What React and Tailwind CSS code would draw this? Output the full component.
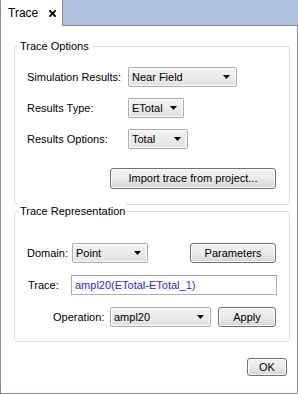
import React from 'react';

const Arrow = () => (
  <svg width="7" height="4" viewBox="0 0 7 4" className="shrink-0">
    <path d="M0 0 H7 L3.5 4 Z" fill="#000" />
  </svg>
);

const CloseX = () => (
  <svg width="7" height="7" viewBox="0 0 7 7" className="shrink-0">
    <path d="M1 1 L6 6 M6 1 L1 6" stroke="#000" strokeWidth="1.8" strokeLinecap="square" />
  </svg>
);

const Select = ({ value, width }) => (
  <div
    className="h-[20px] flex items-center justify-between pl-[3px] pr-[6px] border border-[#acacac] rounded-[2px] bg-gradient-to-b from-[#f4f4f4] to-[#e1e1e1] shadow-[inset_0_0_0_1px_#fafafa]"
    style={{ width }}
  >
    <span className="leading-none">{value}</span>
    <Arrow />
  </div>
);

const Button = ({ children, className = '' }) => (
  <div
    className={`flex items-center justify-center border border-[#707070] rounded-[3px] bg-gradient-to-b from-[#f2f2f2] via-[#ebebeb] to-[#d4d4d4] shadow-[inset_0_0_0_1px_#fbfbfb] ${className}`}
  >
    {children}
  </div>
);

const Group = ({ title, className = '', children }) => (
  <div className={`ml-[13px] w-[276px] border border-[#d5dfe5] rounded-[3px] flex flex-col ${className}`}>
    <span className="-mt-[8px] ml-[4px] px-[1px] bg-white w-fit leading-[14px]">{title}</span>
    {children}
  </div>
);

export default function App() {
  return (
    <div
      className="w-[298px] h-[394px] bg-white text-[11px] text-black flex flex-col"
      style={{ fontFamily: '"Liberation Sans", Arial, sans-serif' }}
    >
      {/* tab strip */}
      <div className="flex h-[26px]">
        <div className="w-[63px] border-l border-r border-[#898c95] bg-white flex items-center pl-[7px] gap-[11px]">
          <span className="text-[12px]">Trace</span>
          <CloseX />
        </div>
        <div className="flex-1 bg-[#afc3de] border-b border-[#898c95]" />
      </div>

      {/* panel */}
      <div className="flex-1 border-l border-r border-b border-[#898c95] flex flex-col">
        <Group title="Trace Options" className="mt-[20px]">
          <div className="mt-[14px] h-[20px] flex items-center pl-[12px]">
            <span className="w-[101px]">Simulation Results:</span>
            <Select value="Near Field" width={109} />
          </div>
          <div className="mt-[11px] h-[20px] flex items-center pl-[12px]">
            <span className="w-[101px]">Results Type:</span>
            <Select value="ETotal" width={56} />
          </div>
          <div className="mt-[11px] h-[20px] flex items-center pl-[12px]">
            <span className="w-[101px]">Results Options:</span>
            <Select value="Total" width={60} />
          </div>
          <div className="mt-[19px] mb-[15px] flex justify-end pr-[13px]">
            <Button className="w-[166px] h-[21px]">Import trace from project...</Button>
          </div>
        </Group>

        <Group title="Trace Representation" className="mt-[6px]">
          <div className="mt-[25px] h-[20px] flex items-center pl-[12px] pr-[13px]">
            <span className="w-[45px]">Domain:</span>
            <Select value="Point" width={76} />
            <Button className="ml-auto w-[86px] h-[20px]">Parameters</Button>
          </div>
          <div className="mt-[12px] h-[20px] flex items-center pl-[13px]">
            <span className="w-[43px]">Trace:</span>
            <div className="w-[206px] h-[20px] flex items-center pl-[3px] border border-[#abadb3] border-t-[#a0a3ab] text-[#1f1fff]">
              ampl20(ETotal-ETotal_1)
            </div>
          </div>
          <div className="mt-[12px] mb-[14px] h-[20px] flex items-center pl-[38px]">
            <span className="w-[57px]">Operation:</span>
            <Select value="ampl20" width={101} />
            <Button className="ml-[7px] w-[58px] h-[20px]">Apply</Button>
          </div>
        </Group>

        <div className="mt-[16px] flex justify-end pr-[10px]">
          <Button className="w-[40px] h-[18px]">OK</Button>
        </div>
      </div>
    </div>
  );
}
